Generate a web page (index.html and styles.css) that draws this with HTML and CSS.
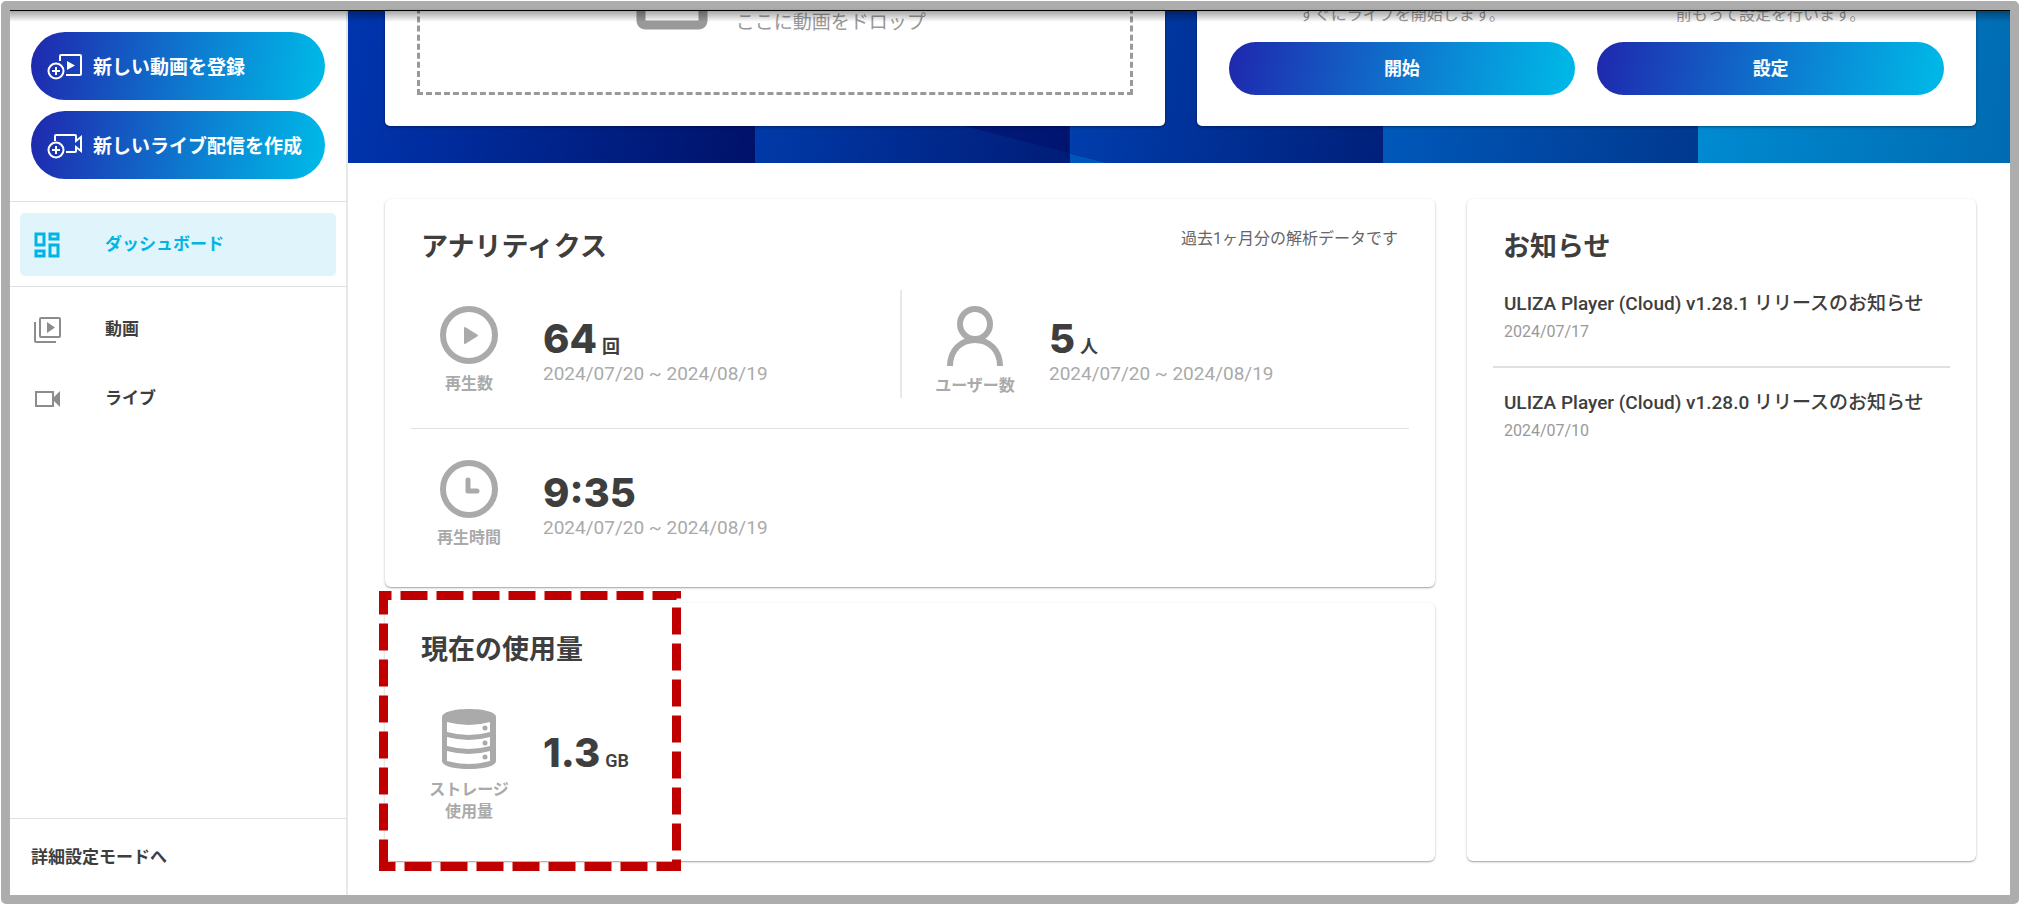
FILE: index.html
```html
<!DOCTYPE html>
<html lang="ja">
<head>
    <meta charset="UTF-8">
    <meta name="viewport" content="width=device-width, initial-scale=1.0">
    <title>ダッシュボード</title>
    <link rel="stylesheet" href="styles.css">
</head>
<body>
    <div class="page">
        <aside class="sidebar">
            <div class="create">
                <button class="btn btn-create" type="button">
                    <svg width="36" height="28" viewBox="0 0 36 28" fill="none" stroke="#fff" stroke-width="2">
                        <path d="M13 8V3a1 1 0 0 1 1-1h19a1 1 0 0 1 1 1v18a1 1 0 0 1-1 1H19"/>
                        <path d="M20 8l8 4.500-8 4.500z" fill="#fff" stroke="none"/>
                        <circle cx="9" cy="18" r="7.500"/>
                        <path d="M9 14v8M5 18h8"/>
                    </svg>
                    <span>新しい動画を登録</span>
                </button>
                <button class="btn btn-create" type="button">
                    <svg width="36" height="28" viewBox="0 0 36 28" fill="none" stroke="#fff" stroke-width="2">
                        <path d="M8 9V4a1 1 0 0 1 1-1h19a1 1 0 0 1 1 1v5l5-4v14l-5-4v4a1 1 0 0 1-1 1h-9"/>
                        <circle cx="9" cy="18" r="7.500"/>
                        <path d="M9 14v8M5 18h8"/>
                    </svg>
                    <span>新しいライブ配信を作成</span>
                </button>
            </div>
            <nav class="menu menu-home">
                <a class="menu-item active" href="#">
                    <svg width="26" height="26" viewBox="0 0 26 26" fill="none" stroke="#00b4e4" stroke-width="3">
                        <path d="M2 2h8v11H2zM16 2h8v5h-8zM2 19h8v5H2zM16 13h8v11h-8z"/>
                    </svg>
                    <span>ダッシュボード</span>
                </a>
            </nav>
            <nav class="menu">
                <a class="menu-item" href="#">
                    <svg width="28" height="28" viewBox="0 0 28 28" fill="none" stroke="#8c8c8c" stroke-width="2">
                        <rect x="6" y="2" width="20" height="19" rx="1"/>
                        <path d="M1 6v19a1 1 0 0 0 1 1h20"/>
                        <path d="M13 6l8 5.500-8 5.500z" fill="#8c8c8c" stroke="none"/>
                    </svg>
                    <span>動画</span>
                </a>
                <a class="menu-item" href="#">
                    <svg width="28" height="28" viewBox="0 0 28 28" fill="none" stroke="#8c8c8c" stroke-width="2">
                        <rect x="2" y="7" width="17" height="14"/>
                        <path d="M19 13l7-7v16l-7-7z" fill="#8c8c8c" stroke="none"/>
                    </svg>
                    <span>ライブ</span>
                </a>
            </nav>
            <a class="advanced" href="#">詳細設定モードへ</a>
        </aside>

        <main class="main">
            <section class="hero">
                <div class="hero-card">
                    <div class="dropzone">
                        <svg width="72" height="60" viewBox="0 0 72 60" fill="none" stroke="#999" stroke-width="9">
                            <rect x="5" y="5" width="62" height="50" rx="4"/>
                        </svg>
                        <p>ここに動画をドロップ</p>
                    </div>
                </div>
                <div class="hero-card live">
                    <div class="live-item">
                        <p>すぐにライブを開始します。</p>
                        <button class="btn" type="button">開始</button>
                    </div>
                    <div class="live-item">
                        <p>前もって設定を行います。</p>
                        <button class="btn" type="button">設定</button>
                    </div>
                </div>
            </section>

            <div class="content">
                <section class="card analytics">
                    <header class="card-head">
                        <h2>アナリティクス</h2>
                        <p>過去1ヶ月分の解析データです</p>
                    </header>
                    <div class="stats">
                        <div class="stat">
                            <div class="stat-icon">
                                <svg width="58" height="58" viewBox="0 0 58 58">
                                    <circle cx="29" cy="29" r="26" fill="none" stroke="#aaa" stroke-width="6"/>
                                    <path d="M25 22l12 7.500-12 7.500z" fill="#aaa" stroke="#aaa" stroke-width="2" stroke-linejoin="round"/>
                                </svg>
                                <span>再生数</span>
                            </div>
                            <div>
                                <p class="value">64<small>回</small></p>
                                <p class="range">2024/07/20 ~ 2024/08/19</p>
                            </div>
                        </div>
                        <div class="stat stat-users">
                            <div class="stat-icon">
                                <svg width="58" height="60" viewBox="0 0 58 60" fill="none" stroke="#aaa" stroke-width="6">
                                    <ellipse cx="29" cy="18" rx="15" ry="15"/>
                                    <path d="M4 60C4 44 15 34 29 34s25 10 25 26"/>
                                </svg>
                                <span>ユーザー数</span>
                            </div>
                            <div>
                                <p class="value">5<small>人</small></p>
                                <p class="range">2024/07/20 ~ 2024/08/19</p>
                            </div>
                        </div>
                    </div>
                    <div class="stats">
                        <div class="stat">
                            <div class="stat-icon">
                                <svg width="58" height="58" viewBox="0 0 58 58" fill="none" stroke="#aaa">
                                    <circle cx="29" cy="29" r="26" stroke-width="6"/>
                                    <path d="M28 20v11h9" stroke-width="5" stroke-linecap="round" stroke-linejoin="round"/>
                                </svg>
                                <span>再生時間</span>
                            </div>
                            <div>
                                <p class="value">9:35</p>
                                <p class="range">2024/07/20 ~ 2024/08/19</p>
                            </div>
                        </div>
                    </div>
                </section>

                <section class="card usage">
                    <h2>現在の使用量</h2>
                    <div class="stat">
                        <div class="stat-icon">
                            <svg width="54" height="62" viewBox="0 0 54 62">
                                <path d="M0 9C0 4 12 1 27 1s27 3 27 8v44c0 5-12 8-27 8S0 58 0 53z" fill="#aaa"/>
                                <path d="M5 14q22 6 43 0v10q-21 6-43 0zM5 29q22 6 43 0v9q-21 6-43 0zM5 43q22 6 43 0v10q-21 6-43 0z" fill="#fff"/>
                                <g fill="#aaa">
                                    <circle cx="43" cy="20" r="2.500"/>
                                    <circle cx="43" cy="35" r="2.500"/>
                                    <circle cx="43" cy="49" r="2.500"/>
                                </g>
                            </svg>
                            <span>ストレージ<br>使用量</span>
                        </div>
                        <p class="value">1.3<small>GB</small></p>
                    </div>
                    <svg class="highlight" width="302" height="280" viewBox="0 0 302 280" fill="none" stroke="#c00000" stroke-width="9" stroke-dasharray="27 9">
                        <path d="M4.500 275.500V4.500h293v271z"/>
                    </svg>
                </section>

                <section class="card news">
                    <h2>お知らせ</h2>
                    <ul>
                        <li>
                            <a href="#">ULIZA Player (Cloud) v1.28.1 リリースのお知らせ</a>
                            <time>2024/07/17</time>
                        </li>
                        <li>
                            <a href="#">ULIZA Player (Cloud) v1.28.0 リリースのお知らせ</a>
                            <time>2024/07/10</time>
                        </li>
                    </ul>
                </section>
            </div>
        </main>
    </div>
</body>
</html>
```
FILE: styles.css
```css
* {
    box-sizing: border-box;
}
body {
    margin: 0;
    padding: 1px;
    background: #fff;
    color: #3e3e3e;
    font-family: Roboto, "Noto Sans CJK JP", sans-serif;
}
h2, p, ul {
    margin: 0;
    padding: 0;
}
a {
    color: inherit;
    text-decoration: none;
}
svg {
    display: block;
    flex: none;
}
.page {
    position: relative;
    display: flex;
    min-height: calc(100vh - 2px);
    border: 9px solid #adadad;
    border-radius: 5px;
}
/* shadow cast by the bar above */
.page::before {
    content: "";
    position: absolute;
    top: 0;
    left: 0;
    right: 0;
    height: 11px;
    border-top: 1px solid #000;
    background: linear-gradient(rgba(0, 0, 0, 0.35), rgba(0, 0, 0, 0));
}

/* sidebar */
.sidebar {
    display: flex;
    flex-direction: column;
    flex: none;
    width: 338px;
    border-right: 2px solid #e8e8e8;
}
.create {
    display: flex;
    flex-direction: column;
    gap: 11px;
    padding: 22px 21px;
}
.btn {
    height: 53px;
    padding: 0 0 4px;
    border: 0;
    border-radius: 34px;
    background: linear-gradient(100deg, #1f27ae, #0b83d3 60%, #00b6e6 96%);
    color: #fff;
    font-family: inherit;
    font-size: 18px;
    font-weight: 700;
}
.btn-create {
    display: flex;
    align-items: center;
    gap: 10px;
    height: 68px;
    padding: 2px 16px 0;
    font-size: 19px;
    white-space: nowrap;
}
.btn-create span,
.menu-item span {
    padding-bottom: 4px;
}
.menu {
    padding: 8px 10px;
    border-top: 1px solid #e0e0e0;
}
.menu-home {
    padding: 11px 10px 10px;
}
.menu-item {
    display: flex;
    align-items: center;
    height: 69px;
    padding-left: 14px;
    font-size: 17px;
    font-weight: 700;
}
.menu-item svg {
    margin-right: 43px;
}
.active {
    height: 63px;
    border-radius: 5px;
    background: #e0f5fb;
    color: #00b4e4;
}
.active svg {
    margin-right: 45px;
}
.advanced {
    margin-top: auto;
    padding: 26px 21px;
    border-top: 1px solid #e0e0e0;
    font-size: 17px;
    font-weight: 700;
    line-height: 24px;
}

/* hero */
.main {
    flex: 1;
    min-width: 0;
}
.hero {
    display: grid;
    grid-template-columns: 1fr 1fr;
    gap: 32px;
    padding: 0 34px 37px 37px;
    background:
        linear-gradient(to top right, transparent 50%, rgba(0, 8, 100, 0.4) 50%) 39.400% 115px / 109px 28px no-repeat,
        linear-gradient(to top right, #0055bb 50%, transparent 50%) 44.400% 100% / 36px 9px no-repeat,
        linear-gradient(100deg, #008dd3, #006ab2) right / 18.800% 100% no-repeat,
        linear-gradient(100deg, #005bbd, #00388f) 76.900% 0 / 19% 100% no-repeat,
        linear-gradient(100deg, #0040b0, #001f7a) 53.600% 0 / 19% 100% no-repeat,
        linear-gradient(100deg, #003cab, #001c78) 30.200% 0 / 19% 100% no-repeat,
        linear-gradient(100deg, #0036b0, #001168) left / 25% 100% no-repeat;
}
.hero-card {
    display: flex;
    flex-direction: column;
    justify-content: flex-end;
    height: 116px;
    padding: 0 32px 31px;
    border-radius: 0 0 5px 5px;
    background: #fff;
    overflow: hidden;
    box-shadow: 0 1px 3px rgba(0, 0, 0, 0.4);
}
.dropzone {
    display: flex;
    justify-content: center;
    gap: 28px;
    flex: none;
    height: 160px;
    padding: 32px 0 0 12px;
    border: 3px dashed #999;
    color: #999;
    font-size: 19px;
    line-height: 28px;
}
.dropzone p {
    padding-top: 39px;
}
.live {
    flex-direction: row;
    justify-content: flex-start;
    align-items: flex-end;
    gap: 22px;
}
.live-item {
    display: flex;
    flex-direction: column;
    gap: 15px;
    flex: 1;
    color: #999;
    font-size: 16px;
    line-height: 24px;
    text-align: center;
}

/* cards */
.content {
    display: grid;
    grid-template-columns: 66fr 32fr;
    gap: 16px 32px;
    padding: 36px 34px 33px 37px;
}
.card {
    border-radius: 6px;
    background: #fff;
    box-shadow: 0 1px 3px rgba(0, 0, 0, 0.2), 0 1px 1px rgba(0, 0, 0, 0.2);
}
.card h2 {
    font-size: 27px;
    line-height: 36px;
}
.analytics {
    padding: 30px 26px 5px;
}
.card-head {
    display: flex;
    justify-content: space-between;
    padding: 0 11px 25px 10px;
}
.card-head p {
    color: #666;
    font-size: 16px;
    line-height: 20px;
}
.stats {
    display: grid;
    grid-template-columns: 1fr 1fr;
    padding-bottom: 30px;
}
.stats + .stats {
    padding-top: 15px;
    border-top: 1px solid #e0e0e0;
}
.stat {
    display: flex;
    gap: 28px;
    height: 108px;
    padding: 16px 12px 0;
}
.stat-users {
    margin-left: -10px;
    padding-left: 27px;
    border-left: 2px solid #e8e8e8;
}
.stat-icon {
    display: flex;
    flex-direction: column;
    align-items: center;
    gap: 9px;
    width: 92px;
    color: #aaa;
    font-size: 16px;
    font-weight: 700;
    line-height: 22px;
    text-align: center;
    white-space: nowrap;
}
.value {
    height: 56px;
    padding-top: 10px;
    font-family: Inter, "Noto Sans CJK JP", sans-serif;
    font-size: 40px;
    font-weight: 800;
    line-height: 46px;
}
.value small {
    margin-left: 5px;
    font-family: Roboto, "Noto Sans CJK JP", sans-serif;
    font-size: 18px;
    font-weight: 600;
    line-height: 18px;
}
.range {
    color: #aaa;
    font-size: 19px;
    line-height: 24px;
}
.usage {
    position: relative;
    padding: 29px 26px 25px;
}
.usage h2 {
    padding-left: 10px;
}
.usage .stat {
    height: 168px;
    padding-top: 40px;
}
.usage .value {
    padding-top: 22px;
}
/* dashed frame round the storage figure */
.highlight {
    position: absolute;
    top: -12px;
    left: -6px;
}

/* news */
.news {
    grid-column: 2;
    grid-row: 1 / 3;
    padding: 30px 26px;
}
.news h2 {
    padding: 0 10px;
}
.news ul {
    list-style: none;
}
.news li {
    padding: 23px 11px 22px;
}
.news li + li {
    padding-top: 19px;
    border-top: 2px solid #e0e0e0;
}
.news a {
    display: block;
    font-size: 19px;
    font-weight: 500;
    line-height: 32px;
}
.news time {
    display: block;
    color: #999;
    font-size: 16px;
    line-height: 24px;
}
```
